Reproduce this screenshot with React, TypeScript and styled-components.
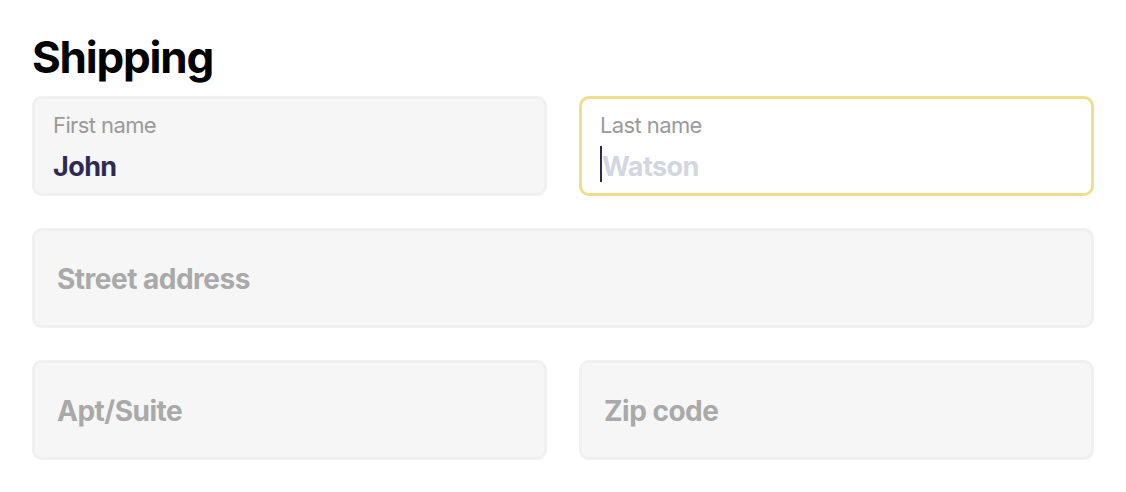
import { createGlobalStyle, styled } from "styled-components";

const GlobalStyle = createGlobalStyle`
  html, body {
    margin: 0;
    background: #ffffff;
  }
  body {
    font-family: Inter, "Noto Sans", sans-serif;
  }
`;

const Page = styled.div`
  padding: 28px 32px 32px 32px;
  width: 1062px;
`;

const Title = styled.h1`
  margin: 0 0 10px 0;
  font-size: 44px;
  line-height: 58px;
  font-weight: 700;
  letter-spacing: -1.2px;
  color: #000;
`;

const Form = styled.div`
  display: grid;
  grid-template-columns: 1fr 1fr;
  column-gap: 32px;
  row-gap: 32px;
`;

const Field = styled.label<{ $wide?: boolean; $focused?: boolean; $labelled?: boolean }>`
  position: relative;
  box-sizing: border-box;
  height: 100px;
  grid-column: ${(p) => (p.$wide ? "1 / span 2" : "auto")};
  display: flex;
  flex-direction: column;
  justify-content: ${(p) => (p.$labelled ? "flex-start" : "center")};
  padding: ${(p) => (p.$labelled ? "12px 18px 0 18px" : "0 20px")};
  border-radius: 10px;
  border: 3px solid ${(p) => (p.$focused ? "#efdf8c" : "#f0f0f0")};
  background: ${(p) => (p.$focused ? "#ffffff" : "#f6f6f6")};
`;

const Label = styled.span`
  font-size: 22px;
  line-height: 28px;
  color: #9a9a9a;
  letter-spacing: -0.6px;
`;

const Input = styled.input<{ $big?: boolean }>`
  border: none;
  outline: none;
  background: transparent;
  padding: 0 0 0 ${(p) => (p.$big ? "2px" : "0")};
  margin: ${(p) => (p.$big ? "2px" : "10px")} 0 0 0;
  font-family: inherit;
  font-size: ${(p) => (p.$big ? "28px" : "27px")};
  font-weight: 700;
  letter-spacing: ${(p) => (p.$big ? "-0.5px" : "-0.6px")};
  line-height: 36px;
  height: 36px;
  color: #2d2b55;
  &::placeholder {
    color: ${(p) => (p.$big ? "#a9a9a9" : "#d2d7df")};
  }
`;

const Caret = styled.span`
  position: absolute;
  left: 18px;
  top: 47px;
  width: 2px;
  height: 36px;
  background: #2d2b55;
`;

const Placeholder = styled(Input)`
  padding-left: 2px;
`;

export default function App() {
  return (
    <Page>
      <GlobalStyle />
      <Title>Shipping</Title>
      <Form>
        <Field $labelled>
          <Label>First name</Label>
          <Input defaultValue="John" />
        </Field>
        <Field $labelled $focused>
          <Label>Last name</Label>
          <Placeholder placeholder="Watson" />
          <Caret />
        </Field>
        <Field $wide>
          <Input $big placeholder="Street address" />
        </Field>
        <Field>
          <Input $big placeholder="Apt/Suite" />
        </Field>
        <Field>
          <Input $big placeholder="Zip code" />
        </Field>
      </Form>
    </Page>
  );
}
